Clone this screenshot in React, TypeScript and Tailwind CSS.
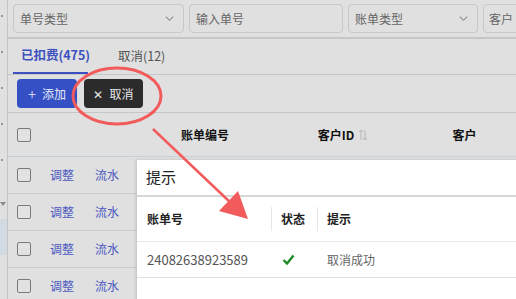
import React from 'react';

const font = { fontFamily: '"Noto Sans CJK SC", "Liberation Sans", sans-serif' };

const Checkbox: React.FC = () => (
  <span className="block w-[14px] h-[14px] border border-[#7a7a7a] rounded-[2px] bg-[#e2e2e2]" />
);

const Chevron: React.FC = () => (
  <svg width="11" height="11" viewBox="0 0 12 12" className="text-[#8a8a8a]">
    <path d="M2 4l4 4 4-4" fill="none" stroke="currentColor" strokeWidth="1.1" />
  </svg>
);

const rows = [0, 1, 2, 3];

const App: React.FC = () => {
  return (
    <div className="relative w-[516px] h-[299px] overflow-hidden bg-[#e0e0e0] flex text-[12px]" style={font}>
      {/* sidebar */}
      <aside className="w-[8px] shrink-0 border-r border-[#c4c4c4] flex flex-col">
        <div className="h-[15px] shrink-0" />
        {[0, 1, 2, 3, 4].map((i) => (
          <div key={i} className="h-[36px] shrink-0">
            <span className="block w-[2px] h-[2px] ml-[1px] bg-[#8d97a6]" />
          </div>
        ))}
        <div className="h-[24px] shrink-0 pt-[7px]">
          <span className="block w-0 h-0 border-l-[3px] border-r-[3px] border-t-[4px] border-l-transparent border-r-transparent border-t-[#8a8a8a]" />
        </div>
        <div className="h-[36px] shrink-0 bg-[#d2dbe4]" />
      </aside>

      {/* main */}
      <main className="flex-1 min-w-0 flex flex-col">
        <div className="shrink-0 flex gap-[5px] pl-[5px] pt-[4px] pb-[4px] border-b-2 border-[#c6c6c6]">
          <div className="w-[171px] h-[29px] shrink-0 border border-[#c8c8c8] rounded-[4px] flex items-center justify-between pl-[6px] pr-[8px] text-[#666]">
            <span>单号类型</span>
            <Chevron />
          </div>
          <div className="w-[154px] h-[29px] shrink-0 border border-[#c8c8c8] rounded-[4px] flex items-center pl-[6px] text-[#666]">
            输入单号
          </div>
          <div className="w-[130px] h-[29px] shrink-0 border border-[#c8c8c8] rounded-[4px] flex items-center justify-between pl-[6px] pr-[8px] text-[#666]">
            <span>账单类型</span>
            <Chevron />
          </div>
          <div className="w-[60px] h-[29px] shrink-0 border border-[#c8c8c8] rounded-[4px] flex items-center pl-[5px] text-[#666]">
            客户
          </div>
        </div>

        <div className="shrink-0 h-[36px] flex items-stretch pl-[5px] border-b border-[#c6c6c6]">
          <div className="w-[75px] shrink-0 border-b-2 border-[#3d50c0] flex items-center pl-[8px] text-[12.5px] font-bold text-[#3d50c0] whitespace-nowrap">
            已扣费(475)
          </div>
          <div className="flex items-center pl-[30px] text-[#555] text-[12.5px] whitespace-nowrap">取消(12)</div>
        </div>

        <div className="shrink-0 flex gap-[7px] pl-[9px] pt-[4px] pb-[4px]">
          <button className="w-[60px] h-[29px] rounded-[4px] bg-[#3450c4] text-[#e8ecf8] flex items-center justify-center gap-[6px]">
            <span className="text-[15px] leading-none font-light">+</span>
            <span>添加</span>
          </button>
          <button className="w-[59px] h-[29px] rounded-[4px] bg-[#2b2b2b] text-[#e8e8e8] flex items-center justify-center gap-[6px]">
            <span className="text-[12px] leading-none">✕</span>
            <span>取消</span>
          </button>
        </div>

        <div className="shrink-0 border-t border-[#c6c6c6]">
          <div className="h-[44px] flex items-center border-b border-[#c6d0d8] font-bold text-[#111]">
            <div className="w-[39px] shrink-0 pl-[9px]">
              <Checkbox />
            </div>
            <div className="w-[78px] shrink-0" />
            <div className="w-[160px] shrink-0 text-center">账单编号</div>
            <div className="w-[116px] shrink-0 flex items-center justify-center gap-[4px]">
              <span>客户ID</span>
              <svg width="10" height="12" viewBox="0 0 10 12" className="text-[#b4b4b4]">
                <path d="M3 11V1M1 3l2-2 2 2M7 1v10M5 9l2 2 2-2" fill="none" stroke="currentColor" strokeWidth="1" />
              </svg>
            </div>
            <div className="flex-1 text-center pl-[12px]">客户</div>
          </div>
          {rows.map((r) => (
            <div key={r} className="h-[37px] flex items-center border-b border-[#cdcdcd]">
              <div className="w-[42px] shrink-0 pl-[9px]">
                <Checkbox />
              </div>
              <span className="w-[45px] text-[#4a58c0]">调整</span>
              <span className="text-[#4a58c0]">流水</span>
            </div>
          ))}
        </div>
      </main>

      {/* dialog */}
      <div className="absolute left-[137px] top-[160px] w-[400px] h-[160px] bg-white shadow-[-1px_0_3px_rgba(0,0,0,0.15)]">
        <div className="h-[37px] flex items-center pl-[9px] text-[15px] text-[#222] border-b-2 border-[#d6d6d6]">提示</div>
        <div className="h-[45px] flex items-center border-b border-[#e4eaf0] font-bold text-[#222]">
          <div className="w-[135px] shrink-0 pl-[10px] border-r border-[#e6e6e6] leading-[24px]">账单号</div>
          <div className="w-[46px] shrink-0 pl-[9px] border-r border-[#e6e6e6] leading-[24px]">状态</div>
          <div className="pl-[9px]">提示</div>
        </div>
        <div className="h-[36px] flex items-center border-b border-[#e0e0e0] text-[#555] text-[13px]">
          <div className="w-[136px] shrink-0 pl-[10px]">24082638923589</div>
          <div className="w-[45px] shrink-0 pl-[9px]">
            <svg width="13" height="11" viewBox="0 0 13 11">
              <path d="M1.5 6l3.5 3.5L11.5 1.5" fill="none" stroke="#1d8a24" strokeWidth="2.4" />
            </svg>
          </div>
          <div className="pl-[9px] text-[#666] text-[12px]">取消成功</div>
        </div>
      </div>

      {/* annotation */}
      <svg className="absolute inset-0 pointer-events-none" width="516" height="299">
        <ellipse cx="117" cy="96" rx="44" ry="28" fill="none" stroke="#f25b5b" strokeWidth="3" />
        <line x1="153" y1="129" x2="232" y2="204" stroke="#f25b5b" strokeWidth="2.5" />
        <polygon points="219,211 238,191 248,219" fill="#f25b5b" />
      </svg>
    </div>
  );
};

export default App;
